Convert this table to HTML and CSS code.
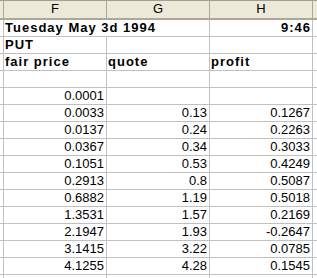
FILE: index.html
```html
<!DOCTYPE html>
<html>
<head>
<meta charset="utf-8">
<link rel="stylesheet" href="styles.css">
</head>
<body>
<div class="sheet">
  <div class="hd edge"></div><div class="hd">F</div><div class="hd">G</div><div class="hd">H</div><div class="hd tail"></div>

  <div class="c edge"></div><div class="c b over">Tuesday May 3d 1994</div><div class="c"></div><div class="c b r">9:46</div><div class="c tail"></div>
  <div class="c edge"></div><div class="c b">PUT</div><div class="c"></div><div class="c"></div><div class="c tail"></div>
  <div class="c edge"></div><div class="c b">fair price</div><div class="c b">quote</div><div class="c b">profit</div><div class="c tail"></div>
  <div class="c edge"></div><div class="c"></div><div class="c"></div><div class="c"></div><div class="c tail"></div>
  <div class="c edge"></div><div class="c r">0.0001</div><div class="c"></div><div class="c"></div><div class="c tail"></div>
  <div class="c edge"></div><div class="c r">0.0033</div><div class="c r">0.13</div><div class="c r">0.1267</div><div class="c tail"></div>
  <div class="c edge"></div><div class="c r">0.0137</div><div class="c r">0.24</div><div class="c r">0.2263</div><div class="c tail"></div>
  <div class="c edge"></div><div class="c r">0.0367</div><div class="c r">0.34</div><div class="c r">0.3033</div><div class="c tail"></div>
  <div class="c edge"></div><div class="c r">0.1051</div><div class="c r">0.53</div><div class="c r">0.4249</div><div class="c tail"></div>
  <div class="c edge"></div><div class="c r">0.2913</div><div class="c r">0.8</div><div class="c r">0.5087</div><div class="c tail"></div>
  <div class="c edge"></div><div class="c r">0.6882</div><div class="c r">1.19</div><div class="c r">0.5018</div><div class="c tail"></div>
  <div class="c edge"></div><div class="c r">1.3531</div><div class="c r">1.57</div><div class="c r">0.2169</div><div class="c tail"></div>
  <div class="c edge"></div><div class="c r">2.1947</div><div class="c r">1.93</div><div class="c r">-0.2647</div><div class="c tail"></div>
  <div class="c edge"></div><div class="c r">3.1415</div><div class="c r">3.22</div><div class="c r">0.0785</div><div class="c tail"></div>
  <div class="c edge"></div><div class="c r">4.1255</div><div class="c r">4.28</div><div class="c r">0.1545</div><div class="c tail"></div>
  <div class="c edge"></div><div class="c"></div><div class="c"></div><div class="c"></div><div class="c tail"></div>
</div>
</body>
</html>
```

FILE: styles.css
```css
html, body {
  margin: 0;
  padding: 0;
  background: #ffffff;
}
.sheet {
  display: grid;
  grid-template-columns: 4px 103px 103px 103px 4px;
  grid-template-rows: 20px;
  grid-auto-rows: 17px;
  width: 317px;
  height: 278px;
  overflow: hidden;
  font-family: "Liberation Sans", Arial, sans-serif;
  font-size: 13px;
  color: #000;
}
.hd {
  box-sizing: border-box;
  background: #ece9d8;
  border-top: 1px solid #a0a090;
  border-bottom: 2px solid #aca899;
  border-right: 1px solid #aca899;
  text-align: center;
  line-height: 16px;
  font-size: 13px;
}
.c {
  box-sizing: border-box;
  border-right: 1px solid #c0c0c0;
  border-bottom: 1px solid #c0c0c0;
  padding: 0 2px 0 1px;
  line-height: 15px;
  white-space: nowrap;
  overflow: visible;
}
.tail {
  border-right: none;
}
.hd.tail {
  border-right: none;
}
.b {
  font-weight: bold;
  letter-spacing: 1px;
}
.r {
  text-align: right;
}
.b.r {
  padding-right: 1px;
}
.over {
  position: relative;
  z-index: 1;
  border-right-color: transparent;
}
```
